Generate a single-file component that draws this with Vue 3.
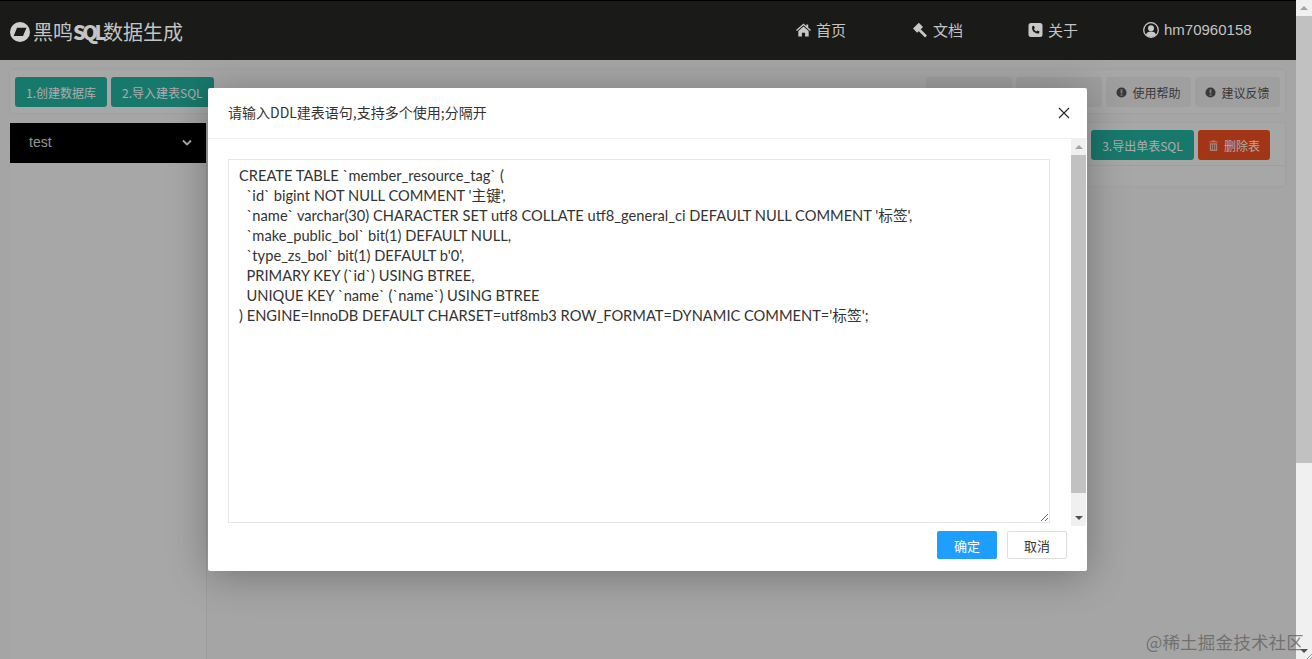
<script setup>
const sql = "CREATE TABLE `member_resource_tag` (\n  `id` bigint NOT NULL COMMENT '主键',\n  `name` varchar(30) CHARACTER SET utf8 COLLATE utf8_general_ci DEFAULT NULL COMMENT '标签',\n  `make_public_bol` bit(1) DEFAULT NULL,\n  `type_zs_bol` bit(1) DEFAULT b'0',\n  PRIMARY KEY (`id`) USING BTREE,\n  UNIQUE KEY `name` (`name`) USING BTREE\n) ENGINE=InnoDB DEFAULT CHARSET=utf8mb3 ROW_FORMAT=DYNAMIC COMMENT='标签';"
</script>

<template>
  <div class="page">
    <div class="main">
      <header class="nav">
        <div class="brand">
          <svg class="logo" viewBox="0 0 20 20"><circle cx="10" cy="10" r="10" fill="#cfcfcf"/><path d="M7 5.800h9.500L13 14H3.700z" fill="#1a1a18"/></svg>
          <span>黑鸣<b>SQL</b>数据生成</span>
        </div>
        <nav class="links">
          <a class="l1"><svg viewBox="0 0 16 14"><path d="M8 0 0 7l1 1 7-6 7 6 1-1-3-2.600V1h-2v1.800zM8 3.300 2.500 8v6h3.800v-4h3.400v4h3.800V8z" fill="#c8c8c8"/></svg>首页</a>
          <a class="l2"><svg class="gavel" viewBox="0 0 15 16"><path d="M6.800.8 11 5 5.200 10.800 1 6.600z" fill="#c8c8c8"/><path d="M7.500 8 14 14.500" stroke="#c8c8c8" stroke-width="2.600" fill="none"/></svg>文档</a>
          <a class="l3"><svg viewBox="0 0 14 14"><rect width="14" height="14" rx="2.500" fill="#c8c8c8"/><path d="M3.700 3.300 5.400 2.700l1 2.300-1 .9c.5 1.100 1.300 1.900 2.500 2.500l.9-1 2.300 1-.6 1.800c-.3.500-2 .8-4.100-.6C4.400 8.800 3 6.500 3.700 3.300z" fill="#1a1a18"/></svg>关于</a>
          <a class="l4"><svg viewBox="0 0 16 16"><circle cx="8" cy="8" r="7.300" fill="none" stroke="#c8c8c8" stroke-width="1.300"/><circle cx="8" cy="6.300" r="3" fill="#c8c8c8"/><path d="M3 12.800c.6-2.200 2.400-3.200 5-3.200s4.400 1 5 3.200C11.500 14.300 9.800 15 8 15s-3.500-.7-5-2.200z" fill="#c8c8c8"/></svg>hm70960158</a>
        </nav>
      </header>

      <div class="content">
        <div class="toolbar">
          <div class="group">
            <button class="btn teal">1.创建数据库</button>
            <button class="btn teal">2.导入建表SQL</button>
          </div>
          <div class="group">
            <button class="btn gray w86"></button>
            <button class="btn gray w86"></button>
            <button class="btn gray w85">
              <svg class="ic" viewBox="0 0 12 12"><circle cx="6" cy="6" r="5.500" fill="#555"/><rect x="5" y="2.500" width="2" height="4.500" fill="#bbb"/><rect x="5" y="8" width="2" height="1.600" fill="#bbb"/></svg>使用帮助
            </button>
            <button class="btn gray w85">
              <svg class="ic" viewBox="0 0 12 12"><circle cx="6" cy="6" r="5.500" fill="#555"/><rect x="5" y="2.500" width="2" height="4.500" fill="#bbb"/><rect x="5" y="8" width="2" height="1.600" fill="#bbb"/></svg>建议反馈
            </button>
          </div>
        </div>

        <div class="work">
          <aside class="side">
            <div class="db">
              <span>test</span>
              <svg viewBox="0 0 10 7"><path d="M1 1.500 5 5.500 9 1.500" fill="none" stroke="#fff" stroke-width="1.800"/></svg>
            </div>
          </aside>
          <section class="panel">
            <div class="panel-actions">
              <button class="btn teal t3">3.导出单表SQL</button>
              <button class="btn red">
                <svg class="ic" viewBox="0 0 12 12"><path d="M4 1.500V.5h4v1h3v1H1v-1zM2 3.500h8V12H2zM3.500 5v5.500h1V5zm2 0v5.500h1V5zm2 0v5.500h1V5z" fill="#f6c4b4" fill-rule="evenodd"/></svg>删除表
              </button>
            </div>
          </section>
        </div>
      </div>

      <div class="overlay">
        <div class="modal">
          <div class="m-head">
            <span>请输入DDL建表语句,支持多个使用;分隔开</span>
            <svg class="close" viewBox="0 0 12 12"><path d="M1 1 11 11M11 1 1 11" stroke="#222" stroke-width="1.100" fill="none"/></svg>
          </div>
          <div class="m-body">
            <div class="m-scroll">
              <textarea class="ddl" readonly :value="sql"></textarea>
            </div>
            <div class="vbar">
              <i class="arr up"></i>
              <i class="thumb"></i>
              <i class="arr down"></i>
            </div>
          </div>
          <div class="m-foot">
            <button class="ok">确定</button>
            <button class="cancel">取消</button>
          </div>
        </div>
      </div>
    </div>

    <div class="pagebar">
      <i class="arr up"></i>
      <i class="thumb page-thumb"></i>
      <i class="arr down"></i>
      <svg class="grip" viewBox="0 0 5 5"><path d="M5 0 0 5M5 3 3 5" stroke="#777" stroke-width=".7" fill="none"/></svg>
    </div>
    <div class="mark">@稀土掘金技术社区</div>
  </div>
</template>

<style>
html, body { margin: 0; overflow: hidden; }
</style>

<style scoped>
.page {
  position: relative;
  display: flex;
  height: 659px;
  font-family: "Liberation Sans", "Noto Sans CJK SC", sans-serif;
  overflow: hidden;
}
.main { position: relative; flex: 1; display: flex; flex-direction: column; background: #f6f6f6; min-width: 0; }
.nav {
  position: relative;
  z-index: 1;
  height: 60px;
  box-sizing: border-box;
  border-top: 1px solid #000;
  background: #1a1a18;
  display: flex;
  align-items: center;
  justify-content: space-between;
  flex: none;
}
.brand { display: flex; align-items: center; padding-left: 10px; font-size: 20px; color: #c4c4c4; gap: 3px; font-family: "Noto Sans CJK SC", sans-serif; margin-top: 2px; }
.brand b { font-weight: 900; letter-spacing: -3.500px; }
.logo { width: 20px; height: 20px; }
.links { display: flex; align-items: center; font-size: 15px; margin-top: -2px; }
.links a { display: flex; align-items: center; gap: 5px; color: #c4c4c4; }
.links svg { height: 14px; width: 15px; }
.links svg.gavel { height: 16px; width: 15px; margin-right: 1px; }
.l1 { width: 116px; }
.l2 { width: 116px; }
.l3 { width: 115px; }
.l4 { width: 153px; }
.l4 svg { width: 16px; height: 16px; }
.content { flex: 1; display: flex; flex-direction: column; padding: 10px 11px 0 10px; min-height: 0; }
.toolbar {
  display: flex; justify-content: space-between;
  height: 43px; box-sizing: border-box; padding: 7px 5px;
  background: #fafafa; border-radius: 3px;
  box-shadow: 0 0 2px rgba(0,0,0,.08);
}
.group { display: flex; gap: 4px; }
.btn {
  height: 30px; border: 0; border-radius: 3px; padding: 0 11px;
  font: 12px "Noto Sans CJK SC", "Liberation Sans", sans-serif;
  color: #fff; display: inline-flex; align-items: center; justify-content: center; white-space: nowrap;
}
.teal { background: #23b5a2; }
.gray { background: #eeeeee; color: #555; padding: 0; }
.w86 { width: 86px; }
.w85 { width: 85px; }
.red { background: #f05020; width: 72px; padding: 0; }
.ic { width: 11px; height: 11px; margin-right: 5px; }
.work { flex: 1; display: flex; margin-top: 10px; min-height: 0; }
.side { width: 196px; background: #fafafa; flex: none; border-right: 1px solid #eaeaea; }
.db {
  height: 40px; box-sizing: border-box; background: #000; color: #ddd;
  display: flex; align-items: center; justify-content: space-between;
  padding: 0 14px 2px 19px; font-size: 14px;
}
.db svg { width: 10px; height: 7px; }
.panel { flex: 1; margin-left: 6px; }
.panel-actions {
  height: 63px; box-sizing: border-box; background: #fafafa; border-radius: 3px;
  display: flex; justify-content: flex-end; gap: 4px;
  padding: 7px 15px 0 0;
  box-shadow: 0 0 2px rgba(0,0,0,.1);
  position: relative;
}
.panel-actions::after {
  content: ""; position: absolute; left: 0; right: 0; top: 42px; border-top: 1px solid #eee;
}
.t3 { width: 103px; padding: 0; }
.mark {
  position: absolute; right: 8px; bottom: 5px; z-index: 5;
  font: 17.500px "Noto Sans CJK SC", sans-serif;
  color: rgba(95,95,95,.75); letter-spacing: 0.2px;
}
.overlay { position: absolute; inset: 0; background: rgba(0,0,0,.33); }
.modal {
  position: absolute; left: 208px; top: 88px; width: 879px; height: 483px;
  background: #fff; border-radius: 2px;
  box-shadow: 0 4px 40px rgba(0,0,0,.3);
  display: flex; flex-direction: column;
  font-family: "Noto Sans CJK SC", sans-serif;
}
.m-head {
  height: 51px; flex: none; box-sizing: border-box;
  border-bottom: 1px solid #f0f0f0;
  display: flex; align-items: center; justify-content: space-between;
  padding: 0 17px 2px 20px; font-size: 14px; color: #333;
}
.close { width: 12px; height: 12px; margin-top: 2px; }
.m-body { height: 387px; flex: none; display: flex; }
.m-scroll { flex: 1; padding: 20px 21px 0 20px; min-width: 0; }
.ddl {
  display: block; width: 100%; height: 364px; box-sizing: border-box;
  border: 1px solid #e6e6e6; outline: 0; padding: 6px 10px 5px;
  font: 14.670px/20px Lato, "Noto Sans CJK SC", sans-serif; color: #333;
  resize: vertical; white-space: pre; overflow: hidden;
}
.vbar, .pagebar { background: #f0f0f0; flex: none; display: flex; flex-direction: column; align-items: center; }
.pagebar { width: 16px; position: relative; }
.vbar { width: 15px; margin-right: 1px; }
.arr { width: 0; height: 0; border-left: 4px solid transparent; border-right: 4px solid transparent; flex: none; margin: 6px 0; }
.arr.up { border-bottom: 4px solid #a3a3a3; }
.arr.down { border-top: 4px solid #505050; margin-top: auto; }
.thumb { flex: 0 0 338px; width: 100%; background: #c1c1c1; display: block; }
.page-thumb { flex: 0 0 447px; }
.grip { position: absolute; right: 0; bottom: 0; width: 5px; height: 5px; }
.m-foot { flex: 1; display: flex; justify-content: flex-end; align-items: flex-start; gap: 10px; padding: 5px 20px 0 0; }
.m-foot button {
  width: 60px; height: 28px; border-radius: 2px; font: 13px "Noto Sans CJK SC", sans-serif; padding: 0;
}
.ok { background: #1e9fff; color: #fff; border: 0; }
.cancel { background: #fff; color: #333; border: 1px solid #dedede; }
</style>
